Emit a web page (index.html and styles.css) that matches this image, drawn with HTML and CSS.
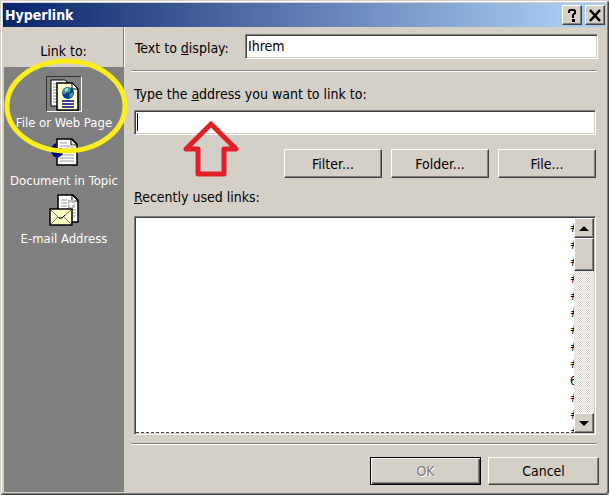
FILE: index.html
```html
<!DOCTYPE html>
<html lang="en">
<head>
    <meta charset="UTF-8">
    <meta name="viewport" content="width=device-width, initial-scale=1.0">
    <title>Hyperlink</title>
    <link rel="stylesheet" href="styles.css">
</head>
<body>
    <div class="dialog">
        <header class="titlebar">
            <h1 class="title">Hyperlink</h1>
            <button class="caption-btn" aria-label="Help">
                <svg width="16" height="15" viewBox="0 0 16 15"><path d="M5 5V3L6 2H10L11 3V5L9 7V10" fill="none" stroke="#000" stroke-width="2"/><path d="M8 11h3v3H8z"/></svg>
            </button>
            <button class="caption-btn" aria-label="Close">
                <svg width="16" height="15" viewBox="0 0 16 15"><path d="M3 2L13 13M13 2L3 13" stroke="#000" stroke-width="2.5"/></svg>
            </button>
        </header>
        <div class="content">
            <aside class="sidebar">
                <div class="sidebar-title">Link to:</div>
                <nav class="places">
                    <button class="place">
                        <span class="place-icon selected">
                            <svg width="34" height="34" viewBox="0 0 34 34">
                                <path d="M4 3h14l4 4v22H4z" fill="#fff" stroke="#000"/>
                                <path d="M6 7h7M6 10h5M6 13h4M6 16h4M6 19h4M6 22h4M6 25h4" stroke="#888"/>
                                <path d="M10 6h15l6 6v21H10z" fill="#ffffd0" stroke="#000" stroke-width="1.5"/>
                                <path d="M25 6v6h6z" fill="#fff" stroke="#000"/>
                                <circle cx="21" cy="16" r="6" fill="#003c98"/>
                                <path d="M17 12q4-4 7 0l-1 3-4 1-2 2-2-3zM22 17l4-2q1 4-3 6z" fill="#3b9c91"/>
                                <path d="M18 12l3-1v2l-3 2z" fill="#b4e8de"/>
                                <path d="M15 24h12M15 27h12M15 30h12" stroke="#000080" stroke-width="1.5"/>
                            </svg>
                        </span>
                        <span>File or Web Page</span>
                    </button>
                    <button class="place">
                        <span class="place-icon">
                            <svg width="34" height="34" viewBox="0 0 34 34">
                                <path d="M10 4h15l5 5v21H10z" fill="#fff" stroke="#000" stroke-width="1.5"/>
                                <path d="M24 4v6h6z" fill="#fff" stroke="#000"/>
                                <path d="M13 8h7M13 11h7M13 14h7M13 20h14M13 23h14M13 26h14" stroke="#999"/>
                                <path d="M20 10h7v8h-7z" fill="#ccc"/>
                                <path d="M21 14h5M23 12v4" stroke="#fff" stroke-width="2"/>
                                <path d="M9 8q-6 3-5 8 1 6 7 7l5-4-2-3 1-3h-6z" fill="#000080"/>
                            </svg>
                        </span>
                        <span>Document in Topic</span>
                    </button>
                    <button class="place">
                        <span class="place-icon">
                            <svg width="34" height="34" viewBox="0 0 34 34">
                                <path d="M11 2h15l5 5v22H11z" fill="#fff" stroke="#000" stroke-width="1.5"/>
                                <path d="M25 2v6h6z" fill="#fff" stroke="#000"/>
                                <path d="M14 7h6M14 10h6M14 13h6M25 17h4M25 20h4M25 23h4" stroke="#999"/>
                                <path d="M21 7h7v8h-7z" fill="#bbb"/>
                                <path d="M22 11h5M24 9v5" stroke="#fff" stroke-width="2"/>
                                <path d="M3 16h22v16H3z" fill="#ffffc8" stroke="#000" stroke-width="1.5"/>
                                <path d="M4 17l8 8h3l9-8M4 31l7-7M24 31l-7-7" fill="none" stroke="#777"/>
                                <path d="M12 25h3l3-3" fill="none" stroke="#000"/>
                            </svg>
                        </span>
                        <span>E-mail Address</span>
                    </button>
                </nav>
            </aside>
            <main class="main">
                <div class="display-row">
                    <label for="display">Text to <u>d</u>isplay:</label>
                    <input class="field" type="text" id="display" value="Ihrem">
                </div>
                <div class="group">
                    <label for="address">Type the <u>a</u>ddress you want to link to:</label>
                    <div class="address-box">
                        <input class="field" type="text" id="address">
                        <span class="caret"></span>
                        <svg class="arrow" width="56" height="58" viewBox="0 0 56 58"><path d="M28 4L53 29H41V54H15V29H3Z" fill="none" stroke="#e31e26" stroke-width="5" stroke-linejoin="round"/></svg>
                    </div>
                    <div class="browse">
                        <button class="btn">Filter...</button>
                        <button class="btn">Folder...</button>
                        <button class="btn">File...</button>
                    </div>
                    <div class="recent-label" id="recent"><u>R</u>ecently used links:</div>
                    <div class="listbox">
                        <ul class="links" aria-labelledby="recent">
                            <li>#</li>
                            <li>#</li>
                            <li>#</li>
                            <li>#</li>
                            <li>#</li>
                            <li>#</li>
                            <li>#</li>
                            <li>#</li>
                            <li>#</li>
                            <li>6</li>
                            <li>#</li>
                            <li>#</li>
                            <li>#</li>
                        </ul>
                        <div class="scrollbar">
                            <button class="scroll-btn" aria-label="Scroll up"><svg width="10" height="5" viewBox="0 0 10 5"><path d="M0 5L5 0L10 5z"/></svg></button>
                            <div class="thumb"></div>
                            <button class="scroll-btn down" aria-label="Scroll down"><svg width="10" height="5" viewBox="0 0 10 5"><path d="M0 0L5 5L10 0z"/></svg></button>
                        </div>
                    </div>
                </div>
                <footer class="actions">
                    <button class="btn ok" disabled>OK</button>
                    <button class="btn">Cancel</button>
                </footer>
            </main>
        </div>
        <svg class="highlight" width="126" height="98" viewBox="0 0 126 98"><ellipse cx="63" cy="49" rx="59" ry="45" fill="none" stroke="#fcee1e" stroke-width="5"/></svg>
    </div>
</body>
</html>
```
FILE: styles.css
```css
* {
    box-sizing: border-box;
}
body {
    margin: 0;
    background-color: #fff;
    font-family: Tahoma, 'DejaVu Sans Condensed', sans-serif;
    font-size: 14px;
    line-height: 18px;
    color: #000;
}
button, input {
    font: inherit;
    color: inherit;
    margin: 0;
    padding: 0;
}
svg {
    display: block;
}
.dialog {
    position: relative;
    margin-right: 1px;
    padding: 2px;
    background-color: #d4d0c8;
    border: 1px solid;
    border-color: #d4d0c8 #404040 #404040 #d4d0c8;
    border-radius: 0 3px 3px 3px;
    box-shadow: inset 1px 1px #fff, inset -1px -1px #808080;
}
.titlebar {
    display: flex;
    align-items: center;
    gap: 3px;
    height: 24px;
    padding: 0 1px 0 2px;
    background: linear-gradient(to right, #0a246a, #a6caf0 93%);
}
.title {
    flex: 1;
    margin: 0;
    font-size: 14px;
    color: #fff;
}
.caption-btn, .btn, .thumb, .scroll-btn {
    display: flex;
    align-items: center;
    justify-content: center;
    background-color: #d4d0c8;
    border: 1px solid;
    border-color: #fff #404040 #404040 #fff;
    box-shadow: inset -1px -1px #808080;
}
.caption-btn {
    width: 20px;
    height: 20px;
}
.content {
    display: flex;
}
.sidebar {
    display: flex;
    flex-direction: column;
    width: 121px;
    padding-left: 1px;
}
.sidebar-title {
    height: 40px;
    padding-top: 15px;
    text-align: center;
    border-right: 1px solid #808080;
    box-shadow: 1px 0 #fff;
}
.places {
    display: flex;
    flex: 1;
    flex-direction: column;
    gap: 2px;
    padding-top: 9px;
    background-color: #808080;
}
.place {
    display: flex;
    flex-direction: column;
    align-items: center;
    height: 56px;
    border: none;
    background: none;
    font-size: 13px;
    line-height: 16px;
    white-space: nowrap;
    color: #fff;
}
.place-icon {
    width: 36px;
    height: 36px;
    margin-bottom: 3px;
    border: 1px solid transparent;
}
.selected {
    border-color: #333 #fff #fff #333;
}
.main {
    flex: 1;
    padding: 7px;
}
.display-row {
    display: flex;
    align-items: flex-start;
    padding: 0 0 11px 4px;
    border-bottom: 1px solid #808080;
    box-shadow: 0 1px #fff;
    margin-right: 2px;
}
.display-row label {
    width: 110px;
    padding-top: 5px;
}
.display-row .field {
    flex: 1;
    margin-right: -1px;
}
.field {
    display: block;
    width: 100%;
    min-width: 0;
    height: 25px;
    padding: 0 2px 2px;
    background-color: #fff;
    border: 1px solid;
    border-color: #808080 #fff #fff #808080;
    box-shadow: inset 1px 1px #404040, inset -1px -1px #d4d0c8;
    outline: none;
}
.group {
    padding: 14px 1px 8px 3px;
    margin-right: 2px;
    border-bottom: 1px solid #808080;
    box-shadow: 0 1px #fff;
}
.address-box {
    position: relative;
    margin-top: 7px;
}
.caret {
    position: absolute;
    left: 3px;
    top: 3px;
    width: 1px;
    height: 18px;
    background-color: #000;
}
.arrow {
    position: absolute;
    left: 49px;
    top: 10px;
}
.browse {
    display: flex;
    justify-content: flex-end;
    gap: 9px;
    margin-top: 14px;
}
.btn {
    width: 98px;
    height: 29px;
}
.recent-label {
    margin: 10px 0;
}
.listbox {
    display: flex;
    height: 219px;
    padding: 1px;
    background-color: #fff;
    border: 1px solid;
    border-color: #808080 #fff #fff #808080;
    box-shadow: inset 1px 1px #404040, inset -1px -1px #d4d0c8;
}
.links {
    flex: 1;
    margin: 0;
    padding: 2px 0 0;
    overflow: hidden;
    list-style: none;
    line-height: 17px;
    border-bottom: 1px dashed #444;
}
.links li {
    width: 4px;
    height: 17px;
    margin-left: auto;
    overflow: hidden;
    font-size: 12px;
}
.scrollbar {
    display: flex;
    flex-direction: column;
    width: 20px;
    background: repeating-conic-gradient(#fff 0 25%, #d4d0c8 0 50%) 0 0 / 2px 2px;
}
.scroll-btn {
    width: 20px;
    height: 20px;
}
.thumb {
    height: 33px;
}
.down {
    margin-top: auto;
}
.actions {
    display: flex;
    justify-content: flex-end;
    gap: 7px;
    padding-top: 13px;
}
.actions .btn {
    width: 111px;
    height: 28px;
}
.actions .ok {
    border-color: #000;
    box-shadow: inset 1px 1px #fff, inset -1px -1px #404040, inset -2px -2px #808080;
    color: #808080;
    text-shadow: 1px 1px #fff;
}
.highlight {
    position: absolute;
    left: 2px;
    top: 56px;
    pointer-events: none;
}
```
